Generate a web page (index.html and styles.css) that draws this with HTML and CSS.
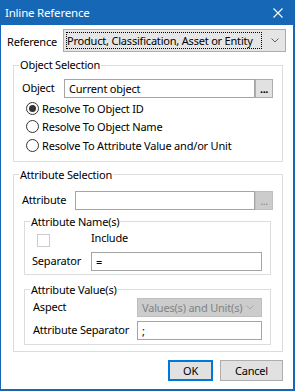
FILE: index.html
```html
<!DOCTYPE html>
<html lang="en">
<head>
  <meta charset="UTF-8">
  <title>Inline Reference</title>
  <link rel="stylesheet" href="styles.css">
</head>
<body>
  <div class="window">
    <div class="titlebar">
      <span class="title">Inline Reference</span>
      <svg class="close" width="10" height="10" viewBox="0 0 10 10">
        <path d="M0.5 0.5 L9.5 9.5 M9.5 0.5 L0.5 9.5" stroke="#fff" stroke-width="1.1" fill="none"/>
      </svg>
    </div>

    <div class="content">
      <div class="row ref-row">
        <span class="lbl lbl-ref">Reference</span>
        <div class="combo">
          <span class="combo-focus">Product, Classification, Asset or Entity</span>
          <svg class="chevron" width="8" height="5" viewBox="0 0 8 5">
            <path d="M0.5 0.5 L4 4 L7.5 0.5" stroke="#606060" fill="none"/>
          </svg>
        </div>
      </div>

      <fieldset class="group group-object">
        <legend>Object Selection</legend>
        <div class="row">
          <span class="lbl lbl-object">Object</span>
          <div class="textbox box-object">Current object</div>
          <div class="browse">...</div>
        </div>
        <div class="radio-list">
          <div class="radio-row"><span class="radio checked"></span>Resolve To Object ID</div>
          <div class="radio-row"><span class="radio"></span>Resolve To Object Name</div>
          <div class="radio-row"><span class="radio"></span>Resolve To Attribute Value and/or Unit</div>
        </div>
      </fieldset>

      <fieldset class="group group-attr">
        <legend>Attribute Selection</legend>
        <div class="row">
          <span class="lbl lbl-attr">Attribute</span>
          <div class="textbox box-attr"></div>
          <div class="browse disabled">...</div>
        </div>

        <fieldset class="group sub names">
          <legend>Attribute Name(s)</legend>
          <div class="include-row">
            <span class="check-cell"><span class="checkbox"></span></span>
            <span>Include</span>
          </div>
          <div class="row">
            <span class="lbl lbl-sep">Separator</span>
            <div class="textbox box-sep">=</div>
          </div>
        </fieldset>

        <fieldset class="group sub values">
          <legend>Attribute Value(s)</legend>
          <div class="row">
            <span class="lbl lbl-val">Aspect</span>
            <div class="combo disabled box-val">
              <span class="combo-text">Values(s) and Unit(s)</span>
              <svg class="chevron" width="8" height="5" viewBox="0 0 8 5">
                <path d="M0.5 0.5 L4 4 L7.5 0.5" stroke="#a8a8a8" fill="none"/>
              </svg>
            </div>
          </div>
          <div class="row row-gap">
            <span class="lbl lbl-val">Attribute Separator</span>
            <div class="textbox box-val">;</div>
          </div>
        </fieldset>
      </fieldset>

      <div class="buttons">
        <div class="btn btn-ok">OK</div>
        <div class="btn btn-cancel">Cancel</div>
      </div>
    </div>
  </div>
</body>
</html>
```

FILE: styles.css
```css
* { box-sizing: border-box; }
body {
  margin: 0;
  font-family: "Noto Sans", sans-serif;
  font-size: 11px;
  letter-spacing: -0.2px;
  color: #000;
  background: #fff;
}
.window {
  width: 295px;
  height: 391px;
  border: solid #1767b7;
  border-width: 0 2px 2px 1px;
  display: flex;
  flex-direction: column;
}
.titlebar {
  height: 25px;
  background: #1767b7;
  color: #fff;
  font-size: 11.5px;
  display: flex;
  align-items: center;
  justify-content: space-between;
  padding: 0 10px 0 4px;
}
.content {
  flex: 1;
  padding: 4px 6px 0;
}

.row {
  display: flex;
  align-items: flex-start;
}
.lbl {
  line-height: 15px;
  padding-top: 1px;
  white-space: nowrap;
}
.lbl-ref { width: 56px; padding-top: 5px; }
.lbl-object { width: 42px; }
.lbl-attr { width: 53px; }
.lbl-sep { width: 59px; }
.lbl-val { width: 104px; }

.combo {
  width: 223px;
  height: 23px;
  background: #e5e5e5;
  border: 1px solid #acacac;
  display: flex;
  align-items: center;
  padding: 2px 6px 2px 2px;
}
.combo-focus {
  flex: 1;
  height: 17px;
  line-height: 15px;
  border: 1px dotted #000;
  margin-right: 9px;
  padding-left: 0;
  white-space: nowrap;
  overflow: hidden;
}
.combo.disabled {
  height: 19px;
  background: #cccccc;
  border-color: #bfbfbf;
  color: #838383;
  padding: 0 7px 0 4px;
}
.combo-text { flex: 1; white-space: nowrap; }

.textbox {
  height: 19px;
  border: 1px solid #a5a5a5;
  background: #fff;
  padding-left: 4px;
  line-height: 17px;
  white-space: nowrap;
}
.box-object { width: 191px; }
.box-attr { width: 180px; }
.box-sep { width: 171px; }
.box-val { width: 125px; }

.browse {
  width: 18px;
  height: 19px;
  margin-left: 0;
  background: #e1e1e1;
  border: 1px solid #adadad;
  font-weight: bold;
  text-align: center;
  line-height: 17px;
  letter-spacing: -0.5px;
}
.browse.disabled {
  background: #cccccc;
  border-color: #bfbfbf;
  color: #8a8a8a;
  font-weight: normal;
}

.group {
  margin: 5px 0 0 6px;
  width: 270px;
  min-width: 0;
  border: 1px solid #dcdcdc;
  padding: 6px 8px 6px 8px;
}
.group legend {
  line-height: 16px;
  padding: 0 1px;
  margin-left: -3px;
}
.group-object .row { height: 20px; }
.group-attr { padding-top: 8px; }
.group.sub {
  width: 247px;
  margin-left: 2px;
}
.names {
  margin-top: 4px;
  padding: 0 8px 3px 7px;
}
.names legend { margin-left: -2px; }
.values {
  margin-top: 7px;
  padding: 0 8px 4px 8px;
}
.row-gap { margin-top: 4px; }

.radio-list { padding-left: 4px; }
.radio-row {
  height: 18.5px;
  display: flex;
  align-items: center;
}
.radio {
  width: 13px;
  height: 13px;
  border: 1px solid #333;
  border-radius: 50%;
  margin-right: 3px;
  display: flex;
  align-items: center;
  justify-content: center;
}
.radio.checked::after {
  content: "";
  width: 7px;
  height: 7px;
  border-radius: 50%;
  background: #333;
}

.include-row {
  display: flex;
  align-items: flex-start;
  height: 22px;
  line-height: 16px;
}
.check-cell {
  width: 59px;
  padding: 4px 0 0 5px;
}
.checkbox {
  display: block;
  width: 13px;
  height: 13px;
  border: 1px solid #cccccc;
  background: #fff;
}

.buttons {
  display: flex;
  justify-content: flex-end;
  gap: 7px;
  margin: 8px 4px 0 0;
}
.btn {
  height: 21px;
  line-height: 19px;
  text-align: center;
  background: #e1e1e1;
  border: 1px solid #adadad;
}
.btn-ok {
  width: 45px;
  border: 2px solid #0078d7;
  line-height: 17px;
}
.btn-cancel { width: 63px; }
```
